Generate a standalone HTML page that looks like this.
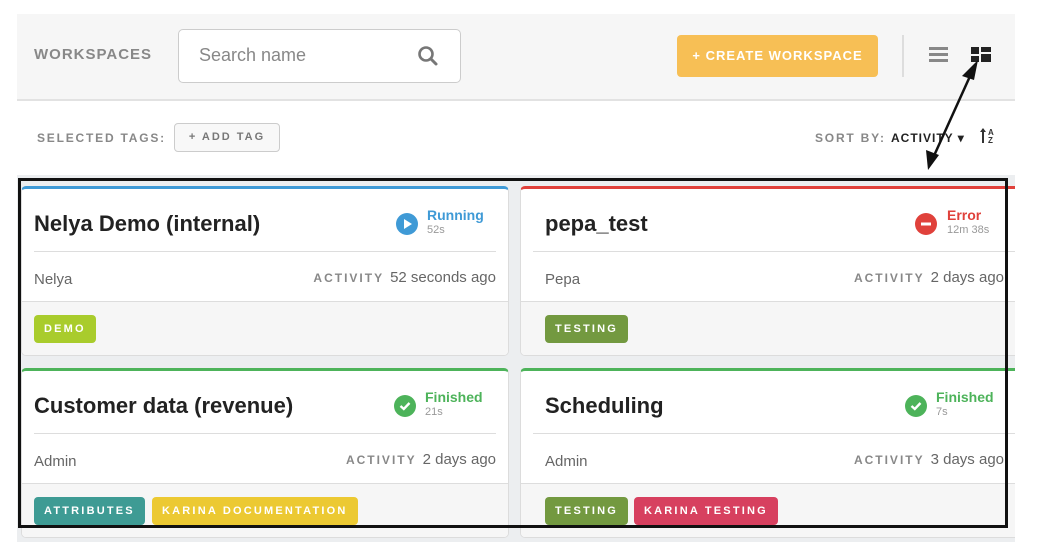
<!DOCTYPE html>
<html><head><meta charset="utf-8"><style>
*{box-sizing:border-box;margin:0;padding:0}
body{width:1055px;height:542px;background:#fff;position:relative;overflow:hidden;font-family:"Liberation Sans",sans-serif}
.abs{position:absolute}
.hdr{left:17px;top:14px;width:998px;height:87px;background:#f6f6f6;border-bottom:2px solid #e2e2e2}
.grid{left:17px;top:175px;width:998px;height:367px;background:#eceef0}
.card{position:absolute;background:#fff;border:1px solid #dcdcdc;border-radius:5px;overflow:hidden}
.card .t{position:absolute;left:12px;top:22px;font-size:22px;font-weight:bold;color:#222}
.card .div{position:absolute;left:12px;right:12px;top:62px;border-top:1px solid #ddd}
.card .own{position:absolute;left:12px;top:82px;font-size:15px;color:#666}
.card .act{position:absolute;right:12px;top:80px;font-size:15px;color:#666;white-space:nowrap}
.card .act b{font-size:12px;letter-spacing:2px;color:#888;margin-right:6px}
.card .ft{position:absolute;left:0;right:0;top:112px;height:60px;background:#f6f6f6;border-top:1px solid #ddd}
.r .t,.r .own{left:24px}
.tag{position:absolute;top:13px;height:28px;border-radius:4px;color:#fff;font-size:11px;font-weight:bold;letter-spacing:2.2px;line-height:28px;padding:0 10px}
.st{position:absolute;top:18px;font-size:14px;font-weight:bold}
.st small{display:block;font-size:11px;font-weight:normal;color:#999;margin-top:1px}
.ic{position:absolute;top:24px;width:22px;height:22px;border-radius:50%}
</style></head><body>
<div class="abs hdr"></div>
<div class="abs" style="left:34px;top:46px;font-size:15px;font-weight:bold;color:#888;letter-spacing:1px">WORKSPACES</div>
<div class="abs" style="left:178px;top:29px;width:283px;height:54px;background:#fff;border:1px solid #ccc;border-radius:5px"></div>
<div class="abs" style="left:199px;top:45px;font-size:18px;color:#888">Search name</div>
<svg class="abs" style="left:417px;top:45px" width="22" height="22" viewBox="0 0 22 22"><circle cx="9" cy="9" r="6.5" fill="none" stroke="#777" stroke-width="2.6"/><line x1="14" y1="14" x2="19" y2="19" stroke="#777" stroke-width="3" stroke-linecap="round"/></svg>
<div class="abs" style="left:677px;top:35px;width:201px;height:42px;background:#f7bf55;border-radius:4px;color:#fff;font-size:13px;font-weight:bold;letter-spacing:1px;line-height:42px;text-align:center">+ CREATE WORKSPACE</div>
<div class="abs" style="left:902px;top:35px;width:2px;height:42px;background:#ddd"></div>
<div class="abs" style="left:929px;top:47px;width:19px;height:3px;background:#888;box-shadow:0 6px 0 #888,0 12px 0 #888"></div>
<div class="abs" style="left:971px;top:47px;width:8px;height:7px;background:#222"></div>
<div class="abs" style="left:981px;top:47px;width:10px;height:5px;background:#222"></div>
<div class="abs" style="left:971px;top:56px;width:8px;height:6px;background:#222"></div>
<div class="abs" style="left:981px;top:54px;width:10px;height:8px;background:#222"></div>
<div class="abs" style="left:37px;top:131px;font-size:12px;font-weight:bold;color:#888;letter-spacing:1.8px">SELECTED TAGS:</div>
<div class="abs" style="left:174px;top:123px;width:106px;height:29px;border:1px solid #ccc;border-radius:4px;background:#f8f8f8;font-size:11px;font-weight:bold;color:#777;letter-spacing:2px;line-height:27px;text-align:center">+ ADD TAG</div>
<div class="abs" style="left:815px;top:131px;font-size:12px;font-weight:bold;color:#888;letter-spacing:1.8px">SORT BY: <span style="color:#222;letter-spacing:1px">ACTIVITY ▾</span></div>
<svg class="abs" style="left:980px;top:127px" width="18" height="18"><line x1="3" y1="2" x2="3" y2="16" stroke="#333" stroke-width="2"/><path d="M0 5 L3 1 L6 5Z" fill="#333"/><text x="8" y="8" font-size="8" font-weight="bold" fill="#333" font-family="Liberation Sans">A</text><text x="8" y="16" font-size="8" font-weight="bold" fill="#333" font-family="Liberation Sans">Z</text></svg>
<div class="abs grid"></div>

<div class="card" style="left:21px;top:186px;width:488px;height:170px;border-top:3px solid #3f9ad6">
<div class="t">Nelya Demo (internal)</div>
<div class="ic" style="left:374px;background:#3f9ad6"><svg width="22" height="22"><path d="M8 6 L16 11 L8 16Z" fill="#fff"/></svg></div>
<div class="st" style="left:405px;color:#3f9ad6">Running<small>52s</small></div>
<div class="div"></div><div class="own">Nelya</div>
<div class="act"><b>ACTIVITY</b>52 seconds ago</div>
<div class="ft"><div class="tag" style="left:12px;background:#a9cc2c">DEMO</div></div></div>

<div class="card r" style="left:520px;top:186px;width:520px;height:170px;border-top:3px solid #e0413b">
<div class="t">pepa_test</div>
<div class="ic" style="left:394px;background:#e0413b"><svg width="22" height="22"><rect x="6" y="9.5" width="10" height="3" fill="#fff"/></svg></div>
<div class="st" style="left:426px;color:#e0413b">Error<small>12m 38s</small></div>
<div class="div"></div><div class="own">Pepa</div>
<div class="act" style="right:35px"><b>ACTIVITY</b>2 days ago</div>
<div class="ft"><div class="tag" style="left:24px;background:#739940">TESTING</div></div></div>

<div class="card" style="left:21px;top:368px;width:488px;height:170px;border-top:3px solid #4db35a">
<div class="t">Customer data (revenue)</div>
<div class="ic" style="left:372px;background:#4db35a"><svg width="22" height="22"><path d="M6.5 11 L9.8 14 L15.5 8" stroke="#fff" stroke-width="2.4" fill="none"/></svg></div>
<div class="st" style="left:403px;color:#4db35a">Finished<small>21s</small></div>
<div class="div"></div><div class="own">Admin</div>
<div class="act"><b>ACTIVITY</b>2 days ago</div>
<div class="ft"><div class="tag" style="left:12px;background:#3e9b94">ATTRIBUTES</div><div class="tag" style="left:130px;background:#ecc932">KARINA DOCUMENTATION</div></div></div>

<div class="card r" style="left:520px;top:368px;width:520px;height:170px;border-top:3px solid #4db35a">
<div class="t">Scheduling</div>
<div class="ic" style="left:384px;background:#4db35a"><svg width="22" height="22"><path d="M6.5 11 L9.8 14 L15.5 8" stroke="#fff" stroke-width="2.4" fill="none"/></svg></div>
<div class="st" style="left:415px;color:#4db35a">Finished<small>7s</small></div>
<div class="div"></div><div class="own">Admin</div>
<div class="act" style="right:35px"><b>ACTIVITY</b>3 days ago</div>
<div class="ft"><div class="tag" style="left:24px;background:#739940">TESTING</div><div class="tag" style="left:113px;background:#d7405f">KARINA TESTING</div></div></div>

<div class="abs" style="left:1015px;top:0;width:40px;height:542px;background:#fff"></div>
<div class="abs" style="left:18px;top:178px;width:990px;height:350px;border:3px solid #111"></div>
<svg class="abs" style="left:0;top:0" width="1055" height="542"><line x1="971" y1="74" x2="933" y2="158" stroke="#111" stroke-width="2.5"/><path d="M978 60 L962 76 L974 80Z" fill="#111"/><path d="M928 170 L926 150 L939 155Z" fill="#111"/></svg>
</body></html>
